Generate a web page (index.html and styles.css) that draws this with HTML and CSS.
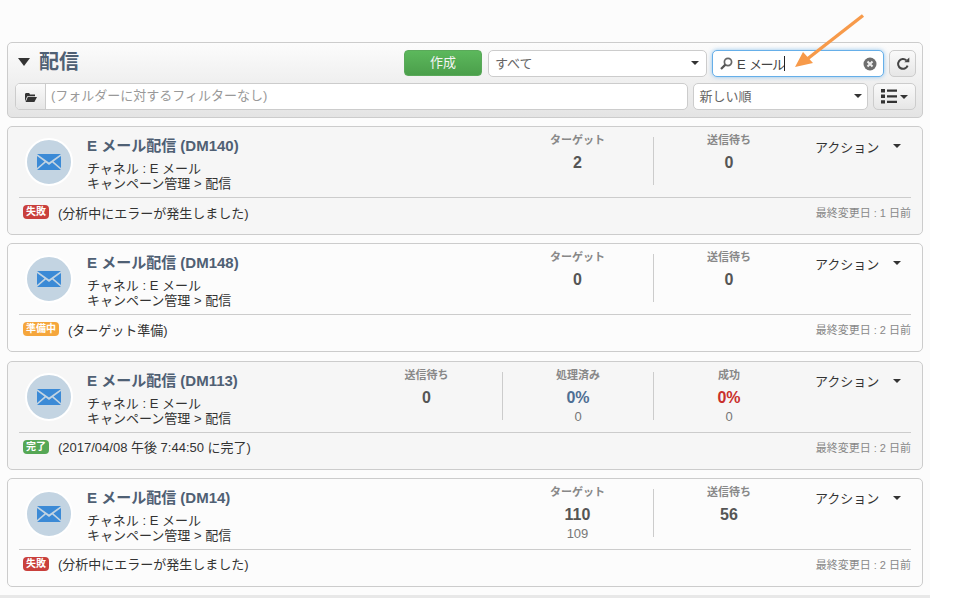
FILE: index.html
```html
<!DOCTYPE html>
<html lang="ja">
<head>
  <meta charset="UTF-8" />
  <meta name="viewport" content="width=device-width, initial-scale=1.0" />
  <title>配信</title>
  <link rel="stylesheet" href="styles.css">
</head>
<body>
  <svg width="0" height="0" class="defs">
    <symbol id="mail" viewBox="0 0 24 16">
      <path fill="#3b8ad6" d="M0 0h24L12 8.5z"/>
      <path fill="#3b8ad6" d="M0 2v12l7.5-6.6zM24 2v12l-7.5-6.6zM0 16l8.8-7.5L12 11l3.2-2.5L24 16z"/>
    </symbol>
  </svg>

  <div class="page">
    <!-- Header panel -->
    <div class="panel">
      <div class="panel-row">
        <span class="caret caret-big"></span>
        <h1>配信</h1>
        <button class="btn-create">作成</button>
        <div class="select select-all">すべて<span class="caret"></span></div>
        <div class="search">
          <svg class="search-icon" width="13" height="13" viewBox="0 0 13 13">
            <circle cx="8" cy="5" r="3.6" fill="none" stroke="#666" stroke-width="1.7"/>
            <path d="M5.4 7.6L1 12" stroke="#555" stroke-width="2.2"/>
          </svg>
          <span class="search-text">E メール</span><span class="cursor"></span>
          <svg class="search-clear" width="14" height="14" viewBox="0 0 14 14">
            <circle cx="7" cy="7" r="6.5" fill="#6e6e6e"/>
            <path d="M4.5 4.5l5 5M9.5 4.5l-5 5" stroke="#eee" stroke-width="2"/>
          </svg>
        </div>
        <button class="btn-icon">
          <svg width="14" height="14" viewBox="0 0 14 14">
            <path d="M11.6 8.6A4.9 4.9 0 1 1 10.4 3.4" fill="none" stroke="#444" stroke-width="2"/>
            <path d="M8.3 5.2h5V0.6z" fill="#444"/>
          </svg>
        </button>
      </div>
      <div class="panel-row">
        <div class="folder">
          <span class="folder-btn">
            <svg width="12" height="10" viewBox="0 0 12 10">
              <path fill="#333" d="M0 2V9.5L2.2 4.2H10V2.6H5L4.2 1H.8zM2.8 5L.6 10h8.8L12 5z"/>
            </svg>
          </span>
          <span class="folder-text">(フォルダーに対するフィルターなし)</span>
        </div>
        <div class="select select-sort">新しい順<span class="caret"></span></div>
        <button class="btn-icon btn-view">
          <svg width="16" height="15" viewBox="0 0 16 15">
            <path fill="#333" d="M0 0h4v3.4H0zM0 5.6h4V9H0zM0 11.2h4v3.4H0zM6 .6h10v2.2H6zM6 6.2h10v2.2H6zM6 11.8h10V14H6z"/>
          </svg>
          <span class="caret"></span>
        </button>
      </div>
    </div>

    <!-- Delivery cards -->
    <div class="card card-grey">
      <div class="card-top">
        <div class="avatar"><svg width="24" height="16"><use href="#mail"/></svg></div>
        <div class="info">
          <h2>E メール配信 (DM140)</h2>
          <p>チャネル : E メール<br>キャンペーン管理 &gt; 配信</p>
        </div>
        <div class="stats">
          <div class="stat"><span class="stat-label">ターゲット</span><strong>2</strong></div>
          <div class="stat"><span class="stat-label">送信待ち</span><strong>0</strong></div>
        </div>
        <div class="action">アクション<span class="caret"></span></div>
      </div>
      <div class="card-foot">
        <span class="badge badge-red">失敗</span>
        <span class="status">(分析中にエラーが発生しました)</span>
        <span class="date">最終変更日 : 1 日前</span>
      </div>
    </div>

    <div class="card">
      <div class="card-top">
        <div class="avatar"><svg width="24" height="16"><use href="#mail"/></svg></div>
        <div class="info">
          <h2>E メール配信 (DM148)</h2>
          <p>チャネル : E メール<br>キャンペーン管理 &gt; 配信</p>
        </div>
        <div class="stats">
          <div class="stat"><span class="stat-label">ターゲット</span><strong>0</strong></div>
          <div class="stat"><span class="stat-label">送信待ち</span><strong>0</strong></div>
        </div>
        <div class="action">アクション<span class="caret"></span></div>
      </div>
      <div class="card-foot">
        <span class="badge badge-orange">準備中</span>
        <span class="status">(ターゲット準備)</span>
        <span class="date">最終変更日 : 2 日前</span>
      </div>
    </div>

    <div class="card card-grey">
      <div class="card-top">
        <div class="avatar"><svg width="24" height="16"><use href="#mail"/></svg></div>
        <div class="info">
          <h2>E メール配信 (DM113)</h2>
          <p>チャネル : E メール<br>キャンペーン管理 &gt; 配信</p>
        </div>
        <div class="stats">
          <div class="stat"><span class="stat-label">送信待ち</span><strong>0</strong></div>
          <div class="stat"><span class="stat-label">処理済み</span><strong class="blue">0%</strong><span class="stat-sub">0</span></div>
          <div class="stat"><span class="stat-label">成功</span><strong class="red">0%</strong><span class="stat-sub">0</span></div>
        </div>
        <div class="action">アクション<span class="caret"></span></div>
      </div>
      <div class="card-foot">
        <span class="badge badge-green">完了</span>
        <span class="status">(2017/04/08 午後 7:44:50 に完了)</span>
        <span class="date">最終変更日 : 2 日前</span>
      </div>
    </div>

    <div class="card">
      <div class="card-top">
        <div class="avatar"><svg width="24" height="16"><use href="#mail"/></svg></div>
        <div class="info">
          <h2>E メール配信 (DM14)</h2>
          <p>チャネル : E メール<br>キャンペーン管理 &gt; 配信</p>
        </div>
        <div class="stats">
          <div class="stat"><span class="stat-label">ターゲット</span><strong>110</strong><span class="stat-sub">109</span></div>
          <div class="stat"><span class="stat-label">送信待ち</span><strong>56</strong></div>
        </div>
        <div class="action">アクション<span class="caret"></span></div>
      </div>
      <div class="card-foot">
        <span class="badge badge-red">失敗</span>
        <span class="status">(分析中にエラーが発生しました)</span>
        <span class="date">最終変更日 : 2 日前</span>
      </div>
    </div>
  </div>

  <!-- Annotation arrow drawn over the screenshot -->
  <svg class="arrow" width="80" height="64" viewBox="0 0 80 64">
    <path d="M71 1.5L14 46" stroke="#f79a4a" stroke-width="3.4" fill="none"/>
    <path d="M3 53L11 38L21 49z" fill="#f79a4a"/>
  </svg>
</body>
</html>
```

FILE: styles.css
```css
* {
  box-sizing: border-box;
}
body {
  margin: 0;
  background: #fff;
  font-family: "Liberation Sans", "Noto Sans CJK JP", sans-serif;
  font-size: 13px;
  color: #333;
}
.defs {
  position: absolute;
}
.page {
  width: 930px;
  height: 598px;
  padding: 42px 7px 0;
  background: #fcfcfc;
  border-bottom: 3px solid #e8e8e8;
}

/* Header panel */
.panel {
  height: 76px;
  margin-bottom: -0.33px;
  padding: 7px 6px 0 7px;
  border: 1px solid #ccc;
  border-radius: 5px;
  background: linear-gradient(#fcfcfc, #e4e4e4);
}
.panel-row {
  display: flex;
  align-items: center;
  height: 27px;
  margin-bottom: 6px;
}
.panel h1 {
  margin: 0 0 4px 9px;
  flex: 1;
  font-size: 20px;
  line-height: 24px;
  color: #4f6074;
}
.caret {
  display: inline-block;
  width: 0;
  height: 0;
  border-left: 4px solid transparent;
  border-right: 4px solid transparent;
  border-top: 4px solid #333;
}
.caret-big {
  margin-left: 3px;
  margin-bottom: 3px;
  border-left-width: 6px;
  border-right-width: 6px;
  border-top-width: 8px;
}
.btn-create {
  align-self: flex-start;
  width: 78px;
  height: 26px;
  padding: 0 0 3px;
  margin-right: 6px;
  border: 1px solid #5aa95a;
  border-radius: 4px;
  background: linear-gradient(#5cb85c, #4b9f4b);
  color: #f4f4f4;
  font: inherit;
}
.select {
  display: flex;
  align-items: center;
  justify-content: space-between;
  height: 27px;
  padding: 0 7px 2px 6px;
  border: 1px solid #ccc;
  border-radius: 5px;
  background: #fff;
  color: #666;
}
.select-all {
  width: 219px;
  margin-right: 5px;
}
.search {
  display: flex;
  align-items: center;
  width: 172px;
  height: 27px;
  margin-right: 5px;
  padding: 0 6px 0 7px;
  border: 1px solid #66afe9;
  border-radius: 5px;
  background: #fff;
  box-shadow: 0 0 4px rgba(102, 175, 233, 0.7);
}
.search-text {
  margin-left: 4px;
  letter-spacing: -1.6px;
  word-spacing: 3px;
  color: #444;
}
.cursor {
  width: 1px;
  height: 15px;
  margin-left: 1px;
  background: #222;
}
.search-clear {
  margin-left: auto;
}
.btn-icon {
  display: flex;
  align-items: center;
  justify-content: center;
  width: 27px;
  height: 27px;
  padding: 0;
  border: 1px solid #ccc;
  border-radius: 5px;
  background: linear-gradient(#fafafa, #e6e6e6);
}
.btn-view {
  width: 43px;
  gap: 3px;
}
.folder {
  display: flex;
  width: 675px;
  height: 27px;
  margin-right: 5px;
  border: 1px solid #ccc;
  border-radius: 5px;
  background: #fff;
  overflow: hidden;
}
.folder-btn {
  display: flex;
  align-items: center;
  justify-content: center;
  width: 30px;
  border-right: 1px solid #ccc;
  background: linear-gradient(#fafafa, #e6e6e6);
}
.folder-text {
  padding-left: 5px;
  line-height: 24px;
  color: #999;
}
.select-sort {
  width: 175px;
  margin-right: 5px;
  padding: 0 5px 2px;
}

/* Delivery cards */
.card {
  height: 109px;
  margin-top: 8.33px;
  padding: 0 11px;
  border: 1px solid #ccc;
  border-radius: 5px;
  background: #fcfcfc;
}
.card-grey {
  background: #f6f6f6;
}
.card-top {
  display: flex;
  height: 71px;
  border-bottom: 1px solid #ccc;
  padding-left: 6px;
}
.avatar {
  display: flex;
  align-items: center;
  justify-content: center;
  width: 48px;
  height: 48px;
  margin-top: 11px;
  border: 2px solid #fff;
  border-radius: 50%;
  background: #c3d4e2;
}
.info {
  flex: 1;
  margin-left: 14px;
  padding-top: 10px;
}
.info h2 {
  margin: 0;
  font-size: 15px;
  line-height: 18px;
  color: #4f6074;
}
.info p {
  margin: 6px 0 0;
  font-size: 13px;
  line-height: 15px;
}
.stats {
  display: flex;
}
.stat {
  display: flex;
  flex-direction: column;
  align-items: center;
  width: 151px;
  height: 48px;
  margin-top: 10px;
  border-left: 1px solid #ccc;
  color: #777;
}
.stat:first-child {
  border-left: none;
}
.stat-label {
  margin-top: -5px;
  font-size: 11px;
  font-weight: bold;
  line-height: 16px;
  color: #888;
}
.stat strong {
  margin-top: 5px;
  font-size: 16px;
  line-height: 20px;
  color: #555;
}
.stat strong.blue {
  color: #4f6f94;
}
.stat strong.red {
  color: #c9302c;
}
.stat-sub {
  margin-top: 1px;
  font-size: 13px;
  line-height: 16px;
}
.action {
  display: flex;
  align-items: center;
  justify-content: space-between;
  width: 107px;
  height: 18px;
  margin-top: 10px;
  padding: 0 10px 0 11px;
  color: #333;
}
.card-foot {
  display: flex;
  align-items: center;
  height: 28px;
  padding: 0 0 0 4px;
}
.badge {
  height: 14px;
  padding: 0 3px;
  border-radius: 4px;
  font-size: 10px;
  font-weight: bold;
  line-height: 14px;
  color: #fff;
}
.badge-red {
  background: #c9403c;
}
.badge-orange {
  background: #f5a63c;
}
.badge-green {
  background: #55a755;
}
.status {
  margin-left: 9px;
  font-size: 13px;
  flex: 1;
}
.date {
  font-size: 11px;
  color: #888;
}

.arrow {
  position: absolute;
  left: 792px;
  top: 14px;
}
```
